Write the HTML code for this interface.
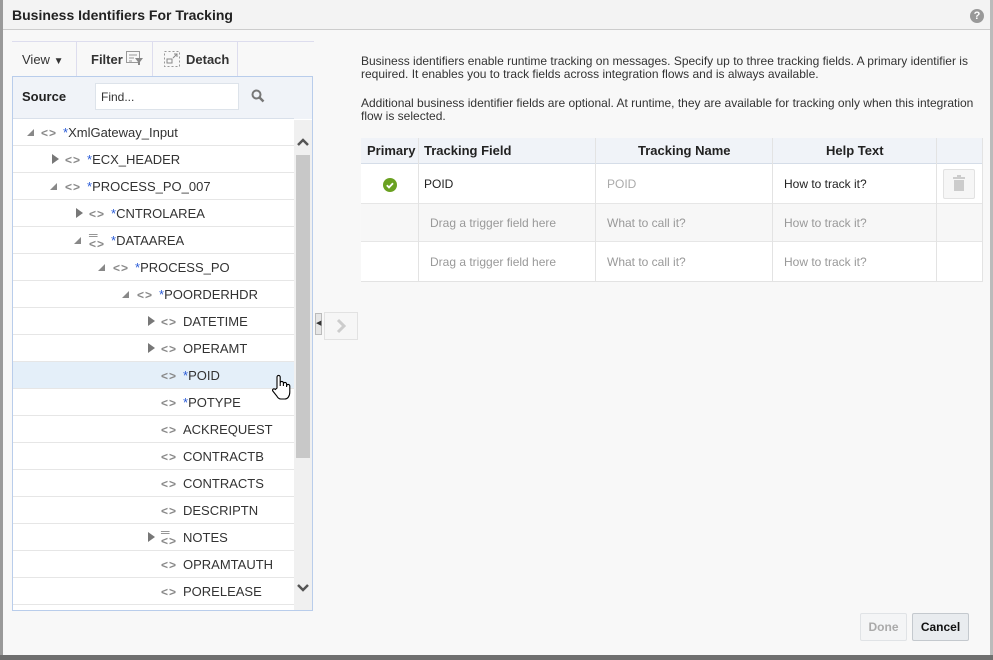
<!DOCTYPE html><html><head><style>
*{box-sizing:border-box;margin:0;padding:0}
body{width:993px;height:660px;position:relative;background:#fff;font-family:"Liberation Sans",Arial,sans-serif;font-size:12px;color:#333;overflow:hidden}
.a{position:absolute}
.row{position:absolute;left:0;width:281px;height:27px;border-bottom:1px solid #e6e6e6}
.row span{position:absolute;top:6px;font-size:13px;color:#333;white-space:nowrap}
.row .st{color:#2a5bd7;font-style:normal}
.tri{position:absolute;top:9px;width:0;height:0}
.tc{border-left:7px solid #777;border-top:5px solid transparent;border-bottom:5px solid transparent;top:8px}
.to{border-right:7px solid #888;border-top:7px solid transparent;top:10px}
.ic{position:absolute;top:7px;font-size:12px;color:#888;font-weight:bold;letter-spacing:1px}
.th{position:absolute;top:0;height:25px;line-height:25px;font-weight:bold;font-size:13px;color:#222}
.cell{position:absolute;font-size:12px}
</style></head><body>
<div class="a" style="left:0;top:0;width:993px;height:660px;background:#f8f8f8"></div>
<div class="a" style="left:0;top:0;width:3px;height:660px;background:#9a9a9a"></div>
<div class="a" style="left:990px;top:0;width:3px;height:660px;background:#bbb"></div>
<div class="a" style="left:0;top:655px;width:993px;height:5px;background:#6f6f6f"></div>
<div class="a" style="left:3px;top:0;width:987px;height:30px;background:#f3f3f3;border-bottom:1px solid #ccc"></div>
<div class="a" style="left:12px;top:7px;font-size:14px;font-weight:bold;color:#222">Business Identifiers For Tracking</div>
<div class="a" style="left:970px;top:9px;width:14px;height:14px;border-radius:50%;background:#999;color:#fff;font-size:11px;font-weight:bold;text-align:center;line-height:14px">?</div>

<div class="a" style="left:12px;top:41px;width:302px;height:1px;background:#dde"></div>
<div class="a" style="left:12px;top:42px;width:226px;height:34px;border-right:1px solid #dde"></div>
<div class="a" style="left:76px;top:42px;width:1px;height:34px;background:#dde"></div>
<div class="a" style="left:152px;top:42px;width:1px;height:34px;background:#dde"></div>
<div class="a" style="left:22px;top:52px;font-size:13px;color:#333">View <span style="font-size:10px">▼</span></div>
<div class="a" style="left:91px;top:52px;font-size:13px;font-weight:bold;color:#333">Filter</div>
<svg class="a" style="left:126px;top:51px" width="18" height="14"><g stroke="#999" fill="none"><rect x="0.5" y="0.5" width="13" height="11"/><path d="M3 4h8M3 7h5M3 10h3"/></g><path d="M9 7h8l-3 4v3h-2v-3z" fill="#888"/></svg>
<svg class="a" style="left:164px;top:51px" width="16" height="16"><rect x="0.5" y="0.5" width="15" height="15" fill="none" stroke="#999" stroke-dasharray="2 2"/><rect x="3" y="8" width="5" height="4" fill="none" stroke="#888"/><path d="M9 7l4-4M10 3h3v3" stroke="#888" fill="none"/></svg>
<div class="a" style="left:186px;top:52px;font-size:13px;font-weight:bold;color:#333">Detach</div>

<div class="a" style="left:12px;top:76px;width:301px;height:535px;border:1px solid #b9cdeb;background:#fff"></div>
<div class="a" style="left:13px;top:77px;width:281px;height:42px;background:#f0f3f8;border-bottom:1px solid #d9e0ea"></div>
<div class="a" style="left:294px;top:77px;width:18px;height:42px;background:#f0f3f8"></div>
<div class="a" style="left:22px;top:89px;font-size:13px;font-weight:bold;color:#222">Source</div>
<div class="a" style="left:95px;top:83px;width:144px;height:27px;background:#fff;border:1px solid #dde3ea;padding:6px 5px;font-size:12px;color:#333">Find...</div>
<svg class="a" style="left:251px;top:89px" width="14" height="14"><circle cx="5.5" cy="5.5" r="4" stroke="#777" stroke-width="2" fill="none"/><path d="M8.5 8.5l4 4" stroke="#777" stroke-width="2.5"/></svg>

<div class="a" style="left:294px;top:120px;width:18px;height:490px;background:#f0f0f0"></div>
<div class="a" style="left:296px;top:155px;width:14px;height:303px;background:#c8c8c8"></div>
<svg class="a" style="left:296px;top:137px" width="14" height="10"><path d="M2 8l5-5 5 5" stroke="#555" stroke-width="2.5" fill="none"/></svg>
<svg class="a" style="left:296px;top:583px" width="14" height="10"><path d="M2 2l5 5 5-5" stroke="#555" stroke-width="2.5" fill="none"/></svg>

<div class="a" style="left:13px;top:119px;width:281px;height:491px;overflow:hidden">
<div class="row" style="top:0"><i class="tri to" style="left:14px"></i><b class="ic" style="left:28px">&lt;&gt;</b><span style="left:50px"><i class="st">*</i>XmlGateway_Input</span></div>
<div class="row" style="top:27px"><i class="tri tc" style="left:39px"></i><b class="ic" style="left:52px">&lt;&gt;</b><span style="left:74px"><i class="st">*</i>ECX_HEADER</span></div>
<div class="row" style="top:54px"><i class="tri to" style="left:37px"></i><b class="ic" style="left:52px">&lt;&gt;</b><span style="left:74px"><i class="st">*</i>PROCESS_PO_007</span></div>
<div class="row" style="top:81px"><i class="tri tc" style="left:63px"></i><b class="ic" style="left:76px">&lt;&gt;</b><span style="left:98px"><i class="st">*</i>CNTROLAREA</span></div>
<div class="row" style="top:108px"><i class="tri to" style="left:61px"></i><b class="ic" style="left:76px;top:4px;line-height:9px">&#9552;<br>&lt;&gt;</b><span style="left:98px"><i class="st">*</i>DATAAREA</span></div>
<div class="row" style="top:135px"><i class="tri to" style="left:85px"></i><b class="ic" style="left:100px">&lt;&gt;</b><span style="left:122px"><i class="st">*</i>PROCESS_PO</span></div>
<div class="row" style="top:162px"><i class="tri to" style="left:109px"></i><b class="ic" style="left:124px">&lt;&gt;</b><span style="left:146px"><i class="st">*</i>POORDERHDR</span></div>
<div class="row" style="top:189px"><i class="tri tc" style="left:135px"></i><b class="ic" style="left:148px">&lt;&gt;</b><span style="left:170px">DATETIME</span></div>
<div class="row" style="top:216px"><i class="tri tc" style="left:135px"></i><b class="ic" style="left:148px">&lt;&gt;</b><span style="left:170px">OPERAMT</span></div>
<div class="row" style="top:243px;background:#e4eff9"><b class="ic" style="left:148px">&lt;&gt;</b><span style="left:170px"><i class="st">*</i>POID</span></div>
<div class="row" style="top:270px"><b class="ic" style="left:148px">&lt;&gt;</b><span style="left:170px"><i class="st">*</i>POTYPE</span></div>
<div class="row" style="top:297px"><b class="ic" style="left:148px">&lt;&gt;</b><span style="left:170px">ACKREQUEST</span></div>
<div class="row" style="top:324px"><b class="ic" style="left:148px">&lt;&gt;</b><span style="left:170px">CONTRACTB</span></div>
<div class="row" style="top:351px"><b class="ic" style="left:148px">&lt;&gt;</b><span style="left:170px">CONTRACTS</span></div>
<div class="row" style="top:378px"><b class="ic" style="left:148px">&lt;&gt;</b><span style="left:170px">DESCRIPTN</span></div>
<div class="row" style="top:405px"><i class="tri tc" style="left:135px"></i><b class="ic" style="left:148px;top:4px;line-height:9px">&#9552;<br>&lt;&gt;</b><span style="left:170px">NOTES</span></div>
<div class="row" style="top:432px"><b class="ic" style="left:148px">&lt;&gt;</b><span style="left:170px">OPRAMTAUTH</span></div>
<div class="row" style="top:459px"><b class="ic" style="left:148px">&lt;&gt;</b><span style="left:170px">PORELEASE</span></div>
<div class="row" style="top:486px"></div>
</div>
<svg class="a" style="left:270px;top:374px" width="22" height="28"><path d="M7 14V3a1.6 1.6 0 013.2 0v9V9a1.6 1.6 0 013.2 0v3-2a1.6 1.6 0 013.2 0v3-1a1.6 1.6 0 013.2 0v6c0 4-2 7-5 7h-4c-2 0-3-1-4-3l-4-5c-1-1.5 1-3 2.5-1.5z" fill="#fff" stroke="#000" stroke-width="1.1"/></svg>

<div class="a" style="left:315px;top:313px;width:7px;height:22px;background:#e6e6e6;border:1px solid #bbb;font-size:7px;line-height:20px;text-align:center">◀</div>
<div class="a" style="left:324px;top:312px;width:34px;height:28px;border:1px solid #e2e2e2;background:#f6f6f6"></div>
<svg class="a" style="left:334px;top:318px" width="14" height="16"><path d="M4 2l6 6-6 6" stroke="#ccc" stroke-width="3" fill="none"/></svg>

<div class="a" style="left:361px;top:55px;width:620px;font-size:12px;line-height:13px;color:#333">Business identifiers enable runtime tracking on messages. Specify up to three tracking fields. A primary identifier is required. It enables you to track fields across integration flows and is always available.</div>
<div class="a" style="left:361px;top:97px;width:620px;font-size:12px;line-height:13px;color:#333">Additional business identifier fields are optional. At runtime, they are available for tracking only when this integration flow is selected.</div>

<div class="a" style="left:361px;top:138px;width:622px;height:144px;background:#fff;border-bottom:1px solid #e3e3e3">
<div class="a" style="left:0;top:0;width:622px;height:26px;background:#f0f3f8;border-bottom:1px solid #d5dde8"></div>
<div class="th" style="left:6px">Primary</div>
<div class="th" style="left:63px">Tracking Field</div>
<div class="th" style="left:277px">Tracking Name</div>
<div class="th" style="left:465px">Help Text</div>
<div class="a" style="left:0;top:65px;width:622px;height:39px;background:#f7f7f7;border-top:1px solid #e6e6e6;border-bottom:1px solid #e6e6e6"></div>
<div class="a" style="left:57px;top:0;width:1px;height:144px;background:#e3e3e3"></div>
<div class="a" style="left:234px;top:0;width:1px;height:144px;background:#e3e3e3"></div>
<div class="a" style="left:411px;top:0;width:1px;height:144px;background:#e3e3e3"></div>
<div class="a" style="left:575px;top:0;width:1px;height:144px;background:#e3e3e3"></div>
<div class="a" style="left:621px;top:0;width:1px;height:144px;background:#e3e3e3"></div>
<svg class="a" style="left:22px;top:40px" width="14" height="14"><circle cx="7" cy="7" r="7" fill="#6aa121"/><path d="M3.8 7.2l2.2 2.2 4-4.2" stroke="#fff" stroke-width="1.8" fill="none"/></svg>
<div class="cell" style="left:63px;top:39px;color:#222">POID</div>
<div class="cell" style="left:246px;top:39px;color:#aaa">POID</div>
<div class="cell" style="left:423px;top:39px;color:#222">How to track it?</div>
<div class="a" style="left:582px;top:31px;width:32px;height:30px;border:1px solid #e2e2e2;border-radius:2px;background:#f6f6f6"></div>
<svg class="a" style="left:592px;top:37px" width="12" height="17"><rect x="4" y="0" width="4" height="2" fill="#ccc"/><rect x="0" y="2" width="12" height="2" fill="#ccc"/><rect x="1" y="5" width="10" height="11" fill="#ccc"/></svg>
<div class="cell" style="left:69px;top:78px;color:#999">Drag a trigger field here</div>
<div class="cell" style="left:246px;top:78px;color:#999">What to call it?</div>
<div class="cell" style="left:423px;top:78px;color:#999">How to track it?</div>
<div class="cell" style="left:69px;top:117px;color:#999">Drag a trigger field here</div>
<div class="cell" style="left:246px;top:117px;color:#999">What to call it?</div>
<div class="cell" style="left:423px;top:117px;color:#999">How to track it?</div>
</div>

<div class="a" style="left:860px;top:613px;width:47px;height:28px;border:1px solid #e0e3e6;background:#f4f5f6;border-radius:2px;font-weight:bold;color:#aaa;text-align:center;line-height:26px">Done</div>
<div class="a" style="left:912px;top:613px;width:57px;height:28px;border:1px solid #c4c9ce;background:#e9ecef;border-radius:2px;font-weight:bold;color:#111;text-align:center;line-height:26px">Cancel</div>
</body></html>
